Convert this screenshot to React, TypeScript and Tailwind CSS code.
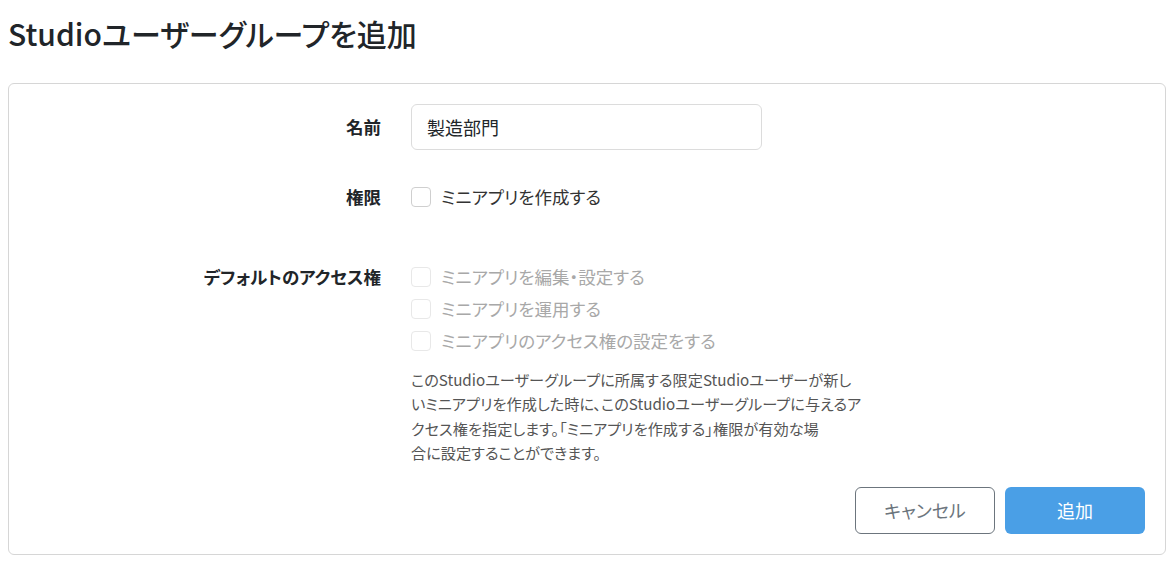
export default function App() {
  const defaultAccess = [
    'ミニアプリを編集・設定する',
    'ミニアプリを運用する',
    'ミニアプリのアクセス権の設定をする',
  ];

  return (
    <div
      className="min-h-screen bg-white pl-[8px] text-[#212529] [font-feature-settings:'palt']"
      style={{ fontFamily: '"Noto Sans CJK JP", "Noto Sans", sans-serif' }}
    >
      <h1 className="mt-[13px] text-[30px] leading-[40px] font-medium">Studioユーザーグループを追加</h1>

      <form className="mt-[30px] w-[1158px] rounded-md border border-[#d6d6d6] pt-[20px] pb-[20px] pr-[20px]">
        {/* name */}
        <div className="flex items-center">
          <label className="w-[372px] text-right text-[17.5px] font-bold">名前</label>
          <input
            defaultValue="製造部門"
            className="ml-[30px] h-[46px] w-[351px] rounded-md border border-[#dcdcdc] px-[15px] text-[18px] text-[#212529] outline-none"
          />
        </div>

        {/* permission */}
        <div className="mt-[31px] flex items-center">
          <span className="w-[372px] text-right text-[17.5px] font-bold">権限</span>
          <label className="ml-[30px] flex h-[32px] items-center gap-[10px] text-[17.5px] text-[#333]">
            <span className="h-[20px] w-[20px] rounded-[4px] border border-[#cfcfcf] bg-white" />
            ミニアプリを作成する
          </label>
        </div>

        {/* default access */}
        <div className="mt-[48px] flex items-start">
          <span className="flex h-[32px] w-[372px] items-center justify-end text-[17.5px] font-bold">
            デフォルトのアクセス権
          </span>
          <div className="ml-[30px]">
            {defaultAccess.map((item) => (
              <label key={item} className="flex h-[32px] items-center gap-[10px] text-[17.5px] text-[#a8a8a8]">
                <span className="h-[20px] w-[20px] rounded-[4px] border border-[#e8e8e8] bg-white" />
                {item}
              </label>
            ))}
            <p className="mt-[10px] whitespace-nowrap text-[15.2px] leading-[24.3px] text-[#555]">
              このStudioユーザーグループに所属する限定Studioユーザーが新し
              <br />
              いミニアプリを作成した時に、このStudioユーザーグループに与えるア
              <br />
              クセス権を指定します。「ミニアプリを作成する」権限が有効な場
              <br />
              合に設定することができます。
            </p>
          </div>
        </div>

        <div className="mt-[23px] flex justify-end gap-[10px]">
          <button
            type="button"
            className="h-[47px] w-[140px] rounded-md border border-[#6c757d] bg-white text-[18px] text-[#6c757d]"
          >
            キャンセル
          </button>
          <button type="button" className="h-[47px] w-[140px] rounded-md bg-[#4a9fe6] text-[18px] text-white">
            追加
          </button>
        </div>
      </form>
    </div>
  );
}
